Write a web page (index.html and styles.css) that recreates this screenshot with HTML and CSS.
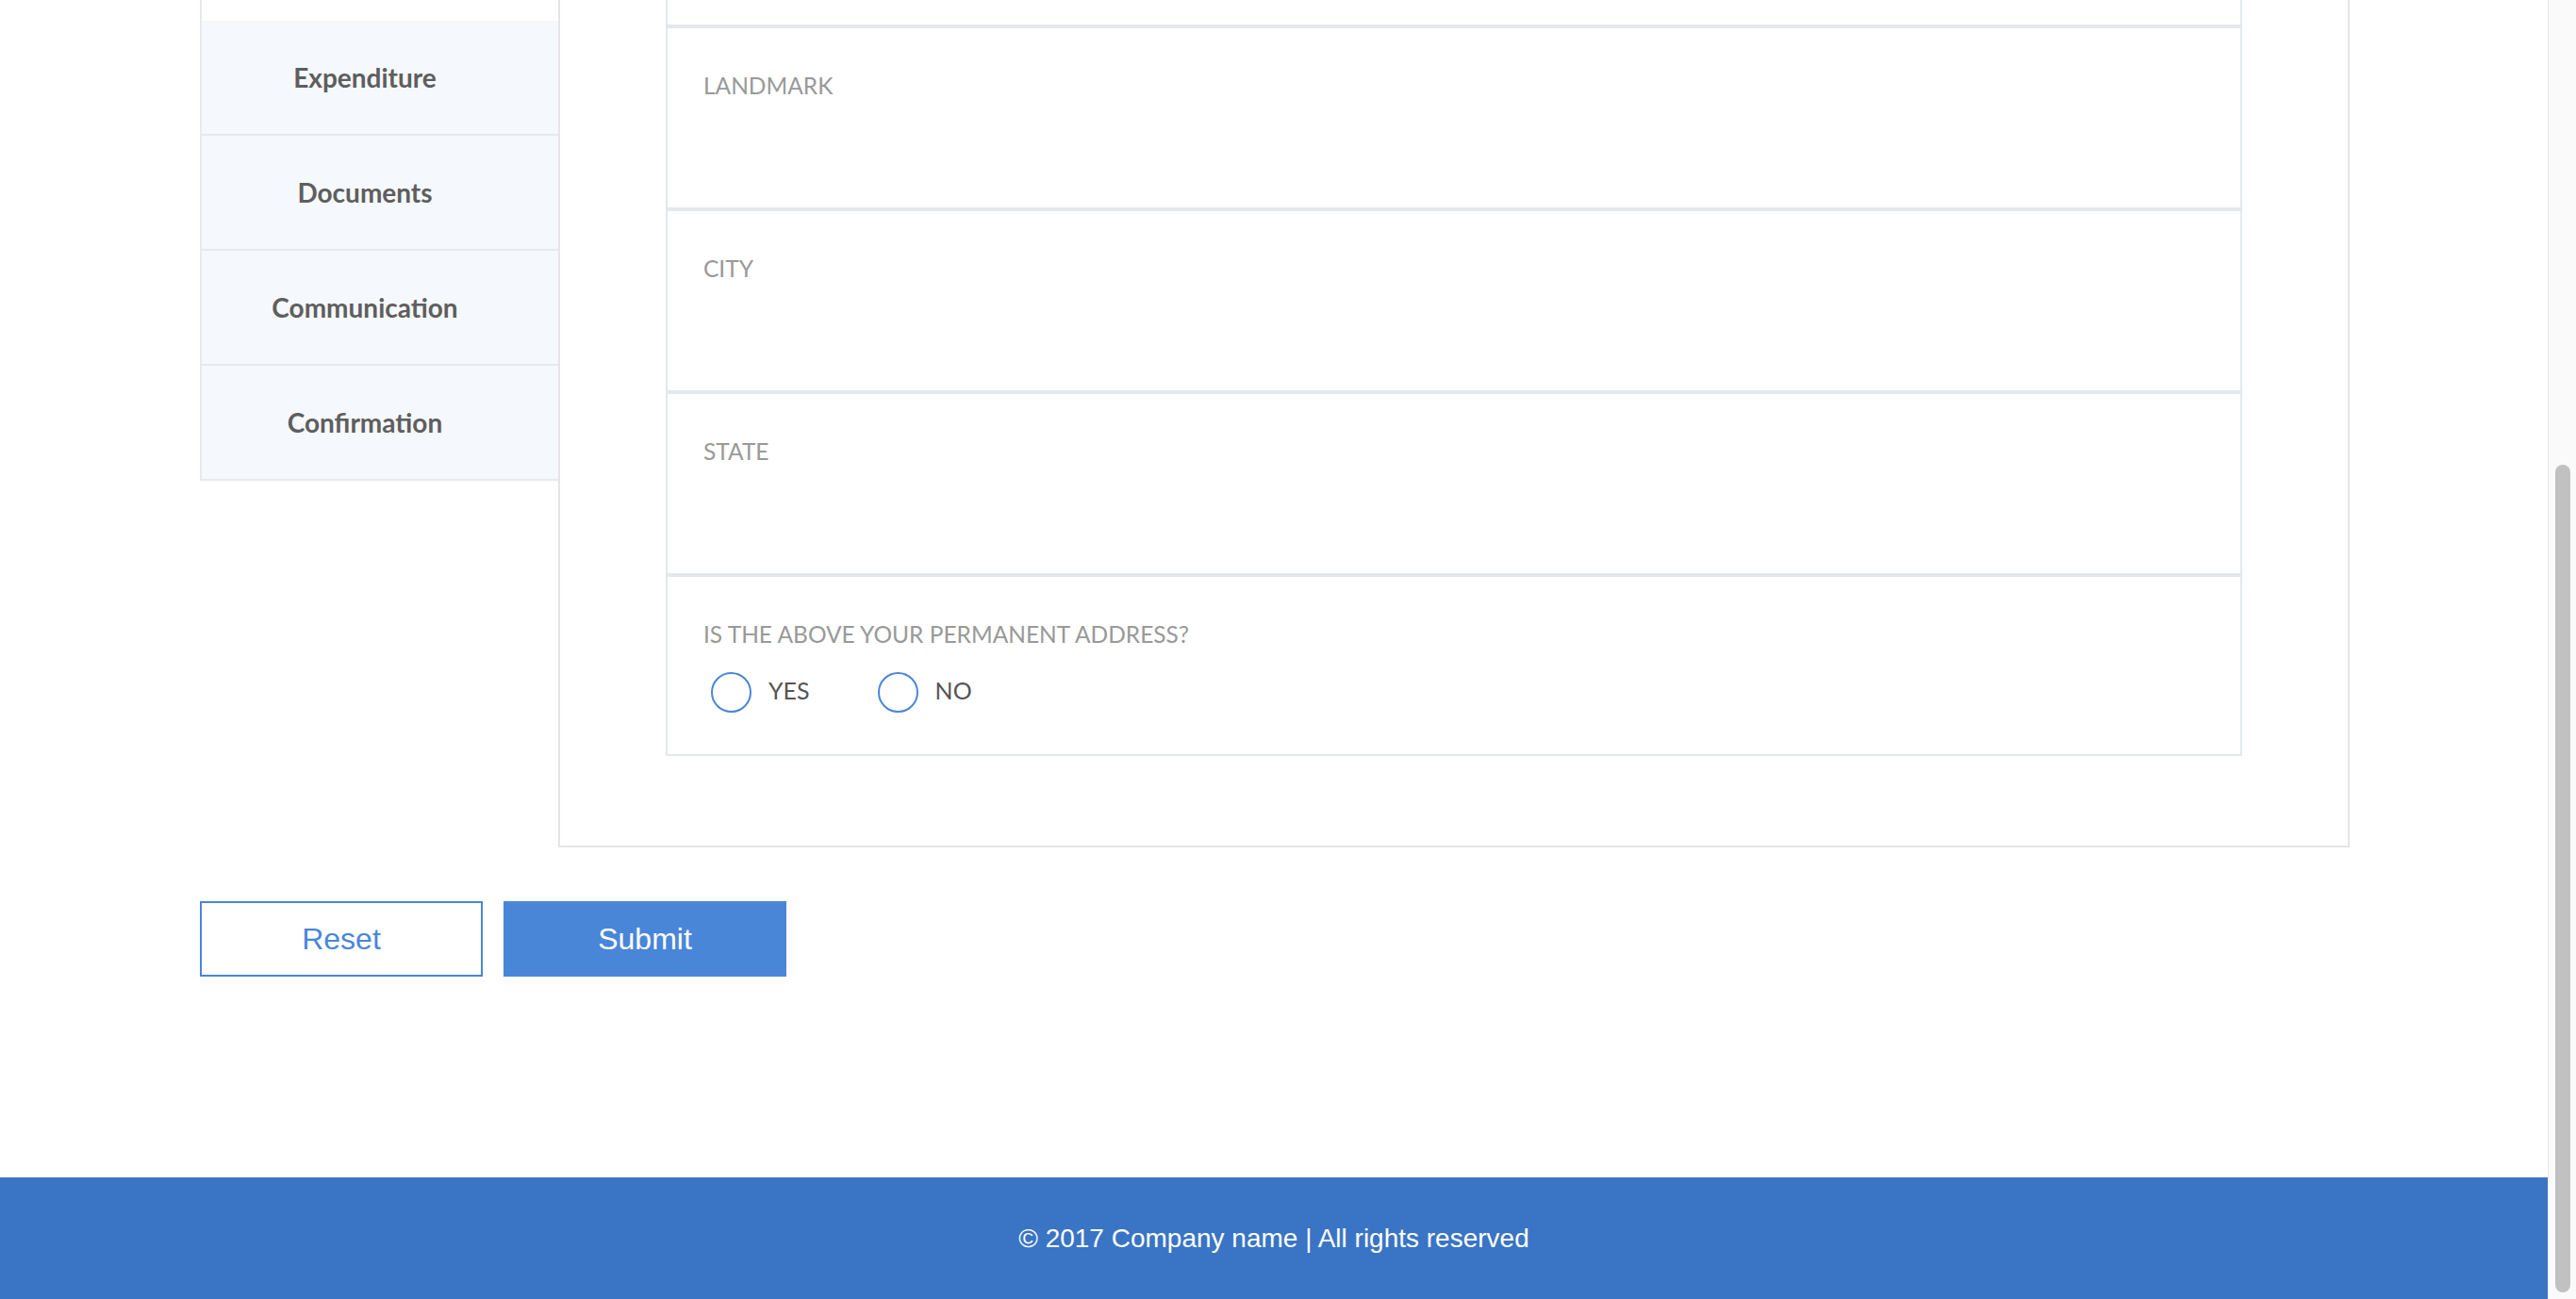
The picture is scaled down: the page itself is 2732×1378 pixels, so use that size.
FILE: index.html
```html
<!DOCTYPE html>
<html lang="en">
<head>
<meta charset="utf-8">
<title>Application form</title>
<link rel="stylesheet" href="styles.css">
</head>
<body>
<div class="page">
  <div class="viewport">
    <div class="content">
      <main class="wrap">
        <div class="form-row">
          <nav class="steps">
            <div class="step step-active"></div>
            <div class="step">Expenditure</div>
            <div class="step">Documents</div>
            <div class="step">Communication</div>
            <div class="step">Confirmation</div>
          </nav>
          <section class="panel">
            <div class="field field-cut"></div>
            <div class="field"><label class="field-label">LANDMARK</label></div>
            <div class="field"><label class="field-label">CITY</label></div>
            <div class="field"><label class="field-label">STATE</label></div>
            <div class="field field-radio">
              <label class="field-label">IS THE ABOVE YOUR PERMANENT ADDRESS?</label>
              <div class="radios">
                <span class="option"><span class="circle"></span><span class="option-text">YES</span></span>
                <span class="option"><span class="circle"></span><span class="option-text">NO</span></span>
              </div>
            </div>
          </section>
        </div>
        <div class="actions">
          <button class="btn btn-outline" type="button">Reset</button>
          <button class="btn btn-solid" type="button">Submit</button>
        </div>
      </main>
    </div>
    <footer class="footer">© 2017 Company name | All rights reserved</footer>
  </div>
  <div class="scrollbar"><div class="thumb"></div></div>
</div>
</body>
</html>
```
FILE: styles.css
```css
html, body {
  margin: 0;
  padding: 0;
  height: 1378px;
  overflow: hidden;
  background: #ffffff;
}

.page {
  display: flex;
  height: 1378px;
}

.viewport {
  flex: 1;
  display: flex;
  flex-direction: column;
  background: #ffffff;
}

.content {
  padding-left: 2px;
}

.wrap {
  width: 2280px;
  margin: 0 auto;
}

.form-row {
  display: flex;
  align-items: flex-start;
}

.steps {
  width: 380px;
  box-sizing: border-box;
  border-left: 2px solid #e6e9ed;
  display: flex;
  flex-direction: column;
}

.step {
  height: 122px;
  box-sizing: border-box;
  border-bottom: 2px solid #e6e9ed;
  background: #f5f8fc;
  display: flex;
  align-items: center;
  justify-content: center;
  padding-right: 32px;
  font-family: Lato, "Open Sans", sans-serif;
  font-weight: 700;
  font-size: 28px;
  color: #5e5e5e;
}

.step-active {
  height: 22px;
  background: #ffffff;
  border-bottom: none;
}

.panel {
  flex: 1;
  box-sizing: border-box;
  border: 2px solid #e5e5e5;
  border-top: none;
  padding: 0 112px 95px;
}

.field {
  height: 194px;
  box-sizing: border-box;
  border: 2px solid #e4e8ec;
  padding: 45px 38px 0;
}

.field-cut {
  height: 28px;
  border-top: none;
  padding: 0;
}

.field-radio {
  height: 192px;
}

.field-label {
  display: block;
  font-family: Lato, "Open Sans", sans-serif;
  font-size: 24.5px;
  line-height: 32px;
  color: #999999;
}

.radios {
  display: flex;
  align-items: center;
  margin-top: 18px;
  padding-left: 8px;
}

.option {
  display: flex;
  align-items: center;
  margin-right: 72px;
}

.circle {
  width: 43px;
  height: 43px;
  box-sizing: border-box;
  border: 2px solid #4a86d8;
  border-radius: 50%;
  margin-right: 18px;
  margin-top: 6px;
}

.option-text {
  font-family: Lato, "Open Sans", sans-serif;
  font-size: 25px;
  color: #555555;
}

.actions {
  display: flex;
  gap: 22px;
  margin-top: 57px;
}

.btn {
  width: 300px;
  height: 80px;
  box-sizing: border-box;
  font-family: "Liberation Sans", Arial, sans-serif;
  font-size: 32px;
  border: 2px solid #4a86d8;
  border-radius: 0;
  padding: 0;
  margin: 0;
}

.btn-outline {
  background: #ffffff;
  color: #4a86d8;
}

.btn-solid {
  background: #4a86d8;
  color: #ffffff;
}

.footer {
  margin-top: 213px;
  background: #3a74c4;
  color: #ffffff;
  text-align: center;
  font-family: "Liberation Sans", Arial, sans-serif;
  font-size: 28px;
  line-height: 32px;
  padding: 49px 0;
}

.scrollbar {
  width: 30px;
  box-sizing: border-box;
  border-left: 1px solid #e8e8e8;
  background: #fafafa;
  padding: 493px 0 0 7px;
}

.thumb {
  width: 16px;
  height: 878px;
  border-radius: 8px;
  background: #c1c1c1;
}
```
